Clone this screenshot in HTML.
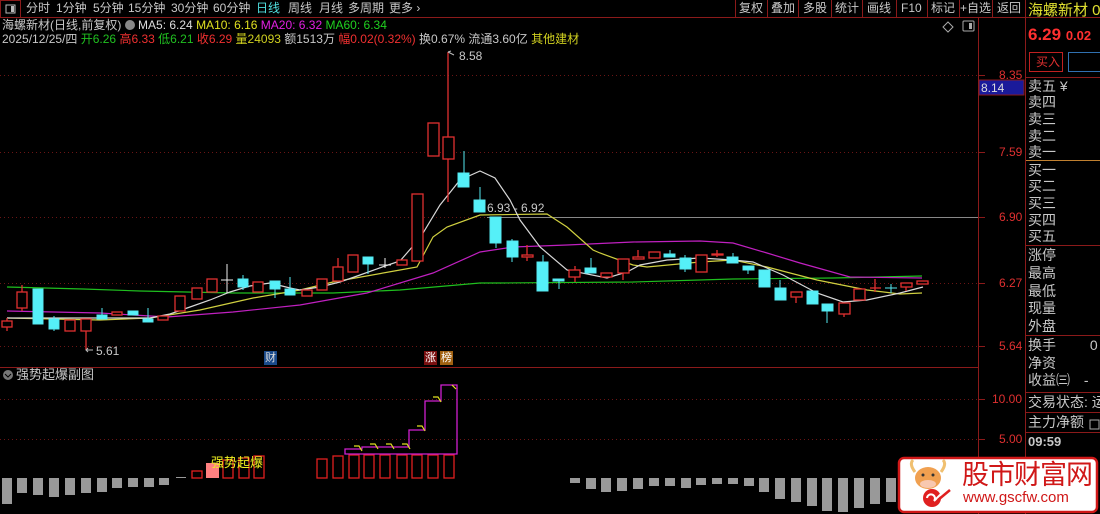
<!DOCTYPE html>
<html><head><meta charset="utf-8"><style>
*{margin:0;padding:0}
body{width:1100px;height:514px;background:#000;overflow:hidden;position:relative;font-family:"Liberation Sans","Noto Sans CJK SC",sans-serif;color:#c8c8c8}
.t{position:absolute;white-space:nowrap;font-size:12px;line-height:14px}
.rp{position:absolute;left:1028px;font-size:14px;line-height:16px;color:#c8c8c8;white-space:nowrap}
</style></head><body>
<svg width="1100" height="514" style="position:absolute;left:0;top:0">
<!-- frame lines -->
<line x1="0" y1="17.5" x2="1100" y2="17.5" stroke="#8b1a1a"/>
<line x1="0" y1="367.5" x2="978" y2="367.5" stroke="#8b1a1a"/>
<line x1="978.5" y1="17" x2="978.5" y2="514" stroke="#8b1a1a"/>
<line x1="1025.5" y1="0" x2="1025.5" y2="514" stroke="#8b1a1a"/>
<rect x="0.5" y="0.5" width="20" height="17" fill="none" stroke="#8b1a1a"/>
<rect x="6" y="5" width="9" height="8" fill="none" stroke="#bbb"/><rect x="11" y="6" width="3" height="6" fill="#bbb"/>
<g stroke="#8b1a1a"><line x1="767.5" y1="0" x2="767.5" y2="17"/><line x1="798.5" y1="0" x2="798.5" y2="17"/><line x1="831.5" y1="0" x2="831.5" y2="17"/><line x1="862.5" y1="0" x2="862.5" y2="17"/><line x1="896.5" y1="0" x2="896.5" y2="17"/><line x1="927.5" y1="0" x2="927.5" y2="17"/><line x1="959.5" y1="0" x2="959.5" y2="17"/><line x1="992.5" y1="0" x2="992.5" y2="17"/><line x1="735.5" y1="0" x2="735.5" y2="17"/></g>
<!-- grid -->
<g stroke="#6a1515" stroke-dasharray="1,3">
<line x1="0" y1="75.5" x2="978" y2="75.5"/><line x1="0" y1="152.5" x2="978" y2="152.5"/><line x1="0" y1="217.5" x2="978" y2="217.5"/><line x1="0" y1="283.5" x2="978" y2="283.5"/><line x1="0" y1="346.5" x2="978" y2="346.5"/>
<line x1="0" y1="399.5" x2="978" y2="399.5"/><line x1="0" y1="439.5" x2="978" y2="439.5"/>
</g>
<g stroke="#8b1a1a"><line x1="978" y1="75.5" x2="985" y2="75.5"/><line x1="978" y1="152.5" x2="985" y2="152.5"/><line x1="978" y1="217.5" x2="985" y2="217.5"/><line x1="978" y1="283.5" x2="985" y2="283.5"/><line x1="978" y1="346.5" x2="985" y2="346.5"/><line x1="978" y1="399.5" x2="985" y2="399.5"/><line x1="978" y1="439.5" x2="985" y2="439.5"/></g>
<line x1="487" y1="217.5" x2="978" y2="217.5" stroke="#888"/>
<rect x="979" y="80" width="45" height="15" fill="#1a1a9a" stroke="#8b1a1a"/>
<!-- icons top right -->
<path d="M948 22 l5 5 -5 5 -5 -5z" fill="none" stroke="#aaa"/>
<rect x="963" y="21" width="11" height="10" rx="1" fill="none" stroke="#aaa"/><rect x="969" y="23" width="3" height="6" fill="#aaa"/>
<!-- MA lines -->
<polyline fill="none" stroke="#1fbf1f" stroke-width="1.2" points="7,287 83,289 140,291 233,293 333,293 400,290 480,283 500,283 633,282 733,279 833,278 922,276"/>
<polyline fill="none" stroke="#c020c0" stroke-width="1.2" points="7,311 100,313 167,317 233,312 300,305 367,293 433,273 480,252 513,247 567,245 633,242 700,241 733,243 767,253 800,263 850,277 922,278"/>
<polyline fill="none" stroke="#d0d040" stroke-width="1.2" points="7,318 100,320 150,318 200,310 253,298 300,290 333,282 400,270 417,267 433,237 447,227 480,215 547,214 567,227 593,250 600,253 633,265 647,267 700,262 733,260 767,267 817,280 867,290 900,294 922,293"/>
<polyline fill="none" stroke="#d8d8d8" stroke-width="1.2" points="7,318 100,318 150,318 170,314 190,307 210,300 230,292 250,286 270,283 290,288 300,290 320,287 340,282 360,275 385,266 400,261 420,238 440,205 460,180 480,171 495,178 510,200 520,220 540,247 567,270 607,278 627,272 640,265 667,260 700,258 733,260 753,262 783,275 817,293 843,302 867,300 900,293 923,287"/>
<!-- candles -->
<g stroke="#e03030" fill="#000" stroke-width="1.3">
<line x1="7" y1="318" x2="7" y2="331"/><rect x="2" y="321" width="10" height="6"/>
<line x1="22" y1="285" x2="22" y2="311"/><rect x="17" y="292" width="10" height="16"/>
<rect x="65" y="320" width="10" height="11"/>
<line x1="86" y1="319" x2="86" y2="350"/><rect x="81" y="319" width="10" height="12"/>
<rect x="112" y="312" width="10" height="3"/>
<rect x="158" y="316" width="10" height="4"/>
<rect x="175" y="296" width="10" height="15"/>
<rect x="192" y="288" width="10" height="11"/>
<rect x="207" y="279" width="10" height="13"/>
<rect x="253" y="282" width="10" height="10"/>
<rect x="302" y="290" width="10" height="6"/>
<rect x="317" y="279" width="10" height="11"/>
<line x1="338" y1="258" x2="338" y2="267"/><rect x="333" y="267" width="10" height="14"/>
<rect x="348" y="255" width="10" height="17"/>
<rect x="397" y="260" width="10" height="5"/>
<rect x="412" y="194" width="11" height="67"/>
<rect x="428" y="123" width="11" height="33"/>
<line x1="448" y1="52" x2="448" y2="202"/><rect x="443" y="137" width="11" height="22"/>
<line x1="527" y1="245" x2="527" y2="261"/><rect x="522" y="255" width="11" height="2"/>
<line x1="575" y1="266" x2="575" y2="282"/><rect x="569" y="270" width="11" height="7"/>
<rect x="601" y="273" width="11" height="4"/>
<line x1="623" y1="259" x2="623" y2="280"/><rect x="618" y="259" width="11" height="14"/>
<line x1="638" y1="250" x2="638" y2="259"/><rect x="633" y="257" width="11" height="2"/>
<rect x="649" y="252" width="11" height="6"/>
<rect x="696" y="255" width="11" height="17"/>
<line x1="717" y1="250" x2="717" y2="257"/><rect x="712" y="254" width="11" height="1"/>
<line x1="796" y1="292" x2="796" y2="303"/><rect x="791" y="292" width="11" height="5"/>
<line x1="844" y1="314" x2="844" y2="317"/><rect x="839" y="303" width="11" height="11"/>
<rect x="854" y="289" width="11" height="11"/>
<line x1="875" y1="279" x2="875" y2="292"/><line x1="870" y1="288" x2="881" y2="288"/>
<line x1="906" y1="287" x2="906" y2="291"/><rect x="901" y="283" width="11" height="4"/>
<rect x="917" y="281" width="11" height="3"/>
</g>
<g stroke="#55e8f0" fill="#55f0f8" stroke-width="1">
<rect x="33" y="289" width="10" height="35"/>
<line x1="54" y1="316" x2="54" y2="331"/><rect x="49" y="319" width="10" height="10"/>
<line x1="102" y1="308" x2="102" y2="315"/><rect x="97" y="315" width="10" height="4"/>
<rect x="128" y="311" width="10" height="4"/>
<line x1="148" y1="308" x2="148" y2="322"/><rect x="143" y="319" width="10" height="3"/>
<line x1="243" y1="275" x2="243" y2="290"/><rect x="238" y="279" width="10" height="8"/>
<line x1="275" y1="281" x2="275" y2="298"/><rect x="270" y="281" width="10" height="8"/>
<line x1="290" y1="277" x2="290" y2="295"/><rect x="285" y="289" width="10" height="6"/>
<line x1="368" y1="257" x2="368" y2="274"/><rect x="363" y="257" width="10" height="7"/>
<line x1="464" y1="151" x2="464" y2="187"/><rect x="458" y="173" width="11" height="14"/>
<line x1="480" y1="187" x2="480" y2="212"/><rect x="474" y="200" width="11" height="12"/>
<line x1="496" y1="217" x2="496" y2="248"/><rect x="490" y="217" width="11" height="26"/>
<line x1="512" y1="239" x2="512" y2="262"/><rect x="507" y="241" width="11" height="16"/>
<line x1="543" y1="255" x2="543" y2="291"/><rect x="537" y="262" width="11" height="29"/>
<line x1="559" y1="279" x2="559" y2="289"/><rect x="553" y="279" width="11" height="2"/>
<line x1="591" y1="258" x2="591" y2="273"/><rect x="585" y="268" width="11" height="5"/>
<line x1="670" y1="250" x2="670" y2="257"/><rect x="664" y="254" width="11" height="3"/>
<line x1="685" y1="255" x2="685" y2="272"/><rect x="680" y="258" width="11" height="11"/>
<line x1="733" y1="253" x2="733" y2="263"/><rect x="727" y="257" width="11" height="6"/>
<line x1="748" y1="266" x2="748" y2="274"/><rect x="743" y="266" width="11" height="4"/>
<rect x="759" y="270" width="11" height="17"/>
<line x1="780" y1="280" x2="780" y2="300"/><rect x="775" y="288" width="11" height="12"/>
<rect x="807" y="291" width="11" height="13"/>
<line x1="827" y1="304" x2="827" y2="323"/><rect x="822" y="304" width="11" height="7"/>
<line x1="891" y1="284" x2="891" y2="293"/><line x1="885" y1="288" x2="897" y2="288"/>
</g>
<g stroke="#eee"><line x1="227" y1="264" x2="227" y2="293"/><line x1="221" y1="280" x2="233" y2="280"/><line x1="385" y1="258" x2="385" y2="268"/><line x1="379" y1="265" x2="391" y2="265"/></g>
<!-- annotations -->
<path d="M86 350 H93 M88 348 l-2 2 2 2" stroke="#bbb" fill="none"/>
<path d="M448 52 l6 3 M448 52 l3 -1" stroke="#bbb" fill="none"/>
<rect x="264" y="351" width="13" height="14" fill="#1a4a8a"/>
<rect x="424" y="351" width="13" height="14" fill="#7a1010"/>
<rect x="440" y="351" width="13" height="14" fill="#a06010"/>
<!-- sub chart -->
<circle cx="8" cy="375" r="5" fill="#777"/><path d="M5 374 l3 3 3 -3" stroke="#000" fill="none"/>
<g fill="#999"><rect x="2" y="478" width="10" height="26"/><rect x="17" y="478" width="10" height="15"/><rect x="33" y="478" width="10" height="17"/><rect x="49" y="478" width="10" height="19"/><rect x="65" y="478" width="10" height="17"/><rect x="81" y="478" width="10" height="15"/><rect x="97" y="478" width="10" height="14"/><rect x="112" y="478" width="10" height="10"/><rect x="128" y="478" width="10" height="9"/><rect x="144" y="478" width="10" height="9"/><rect x="159" y="478" width="10" height="7"/><rect x="176" y="477" width="10" height="1"/>
<rect x="570" y="478" width="10" height="5"/><rect x="586" y="478" width="10" height="11"/><rect x="601" y="478" width="10" height="14"/><rect x="617" y="478" width="10" height="13"/><rect x="633" y="478" width="10" height="11"/><rect x="649" y="478" width="10" height="8"/><rect x="665" y="478" width="10" height="8"/><rect x="681" y="478" width="10" height="10"/><rect x="696" y="478" width="10" height="7"/><rect x="712" y="478" width="10" height="6"/><rect x="728" y="478" width="10" height="6"/><rect x="744" y="478" width="10" height="8"/><rect x="759" y="478" width="10" height="14"/><rect x="775" y="478" width="10" height="21"/><rect x="791" y="478" width="10" height="24"/><rect x="807" y="478" width="10" height="28"/><rect x="822" y="478" width="10" height="33"/><rect x="838" y="478" width="10" height="34"/><rect x="854" y="478" width="10" height="30"/><rect x="870" y="478" width="10" height="26"/><rect x="886" y="478" width="10" height="24"/></g>
<rect x="206" y="463" width="13" height="15" fill="#ff8080"/>
<g fill="none" stroke="#e02020" stroke-width="1.3">
<rect x="192" y="471" width="10" height="7"/><rect x="223" y="460" width="10" height="18"/><rect x="239" y="458" width="10" height="20"/><rect x="254" y="456" width="10" height="22"/>
<rect x="317" y="459" width="10" height="19"/><rect x="333" y="456" width="10" height="22"/><rect x="349" y="455" width="10" height="23"/><rect x="364" y="455" width="10" height="23"/><rect x="380" y="455" width="10" height="23"/><rect x="397" y="455" width="10" height="23"/><rect x="412" y="455" width="10" height="23"/><rect x="428" y="455" width="10" height="23"/><rect x="444" y="455" width="10" height="23"/>
</g>
<path d="M345 454 V449 H362 V447 H409 V430 H425 V401 H441 V385 H457 V454 Z" fill="none" stroke="#d020d0" stroke-width="1.3"/>
<g stroke="#e0e020" fill="none" stroke-width="1.2"><path d="M354 446 h5 l3 5"/><path d="M370 444 h5 l3 5"/><path d="M386 444 h5 l3 5"/><path d="M402 444 h5 l3 5"/><path d="M417 426 h5 l3 5"/><path d="M433 397 h5 l3 5"/><path d="M452 385 l4 4"/></g>
<!-- right panel lines -->
<line x1="1026" y1="77.5" x2="1100" y2="77.5" stroke="#8b1a1a"/>
<line x1="1026" y1="160.5" x2="1100" y2="160.5" stroke="#c08030"/>
<line x1="1026" y1="245.5" x2="1100" y2="245.5" stroke="#8b1a1a"/>
<line x1="1026" y1="335.5" x2="1100" y2="335.5" stroke="#8b1a1a"/>
<line x1="1026" y1="392.5" x2="1100" y2="392.5" stroke="#8b1a1a"/>
<line x1="1026" y1="412.5" x2="1100" y2="412.5" stroke="#8b1a1a"/>
<line x1="1026" y1="432.5" x2="1100" y2="432.5" stroke="#8b1a1a"/>
<rect x="1029.5" y="52.5" width="33" height="19" fill="none" stroke="#c02020"/>
<rect x="1068.5" y="52.5" width="40" height="19" fill="none" stroke="#3070b0"/>
<rect x="1090" y="420" width="9" height="9" fill="none" stroke="#aaa"/>
<!-- logo -->
<rect x="899" y="458" width="198" height="54" rx="5" fill="#fff" stroke="#d01818" stroke-width="2.5"/>
<ellipse cx="928" cy="478" rx="13" ry="11" fill="#f0a050"/>
<path d="M915 472 q-6 -8 -2 -12 M941 472 q6 -8 2 -12" stroke="#f0c070" stroke-width="3" fill="none"/>
<ellipse cx="928" cy="484" rx="8" ry="4" fill="#f8c8b0"/>
<circle cx="923" cy="475" r="1.5" fill="#333"/><circle cx="933" cy="475" r="1.5" fill="#333"/>
<circle cx="932" cy="498" r="9" fill="#e02020"/><path d="M927 498 a4 4 0 1 1 7 3 l6 -6 l4 3" stroke="#fff" stroke-width="2" fill="none"/>
<path d="M938 500 l12 -10" stroke="#e02020" stroke-width="2.5"/>
</svg>
<!-- toolbar text -->
<div class="t" style="top:1px;left:26px;color:#c8c8c8;font-size:12px">分时</div>
<div class="t" style="top:1px;left:56px">1分钟</div>
<div class="t" style="top:1px;left:93px">5分钟</div>
<div class="t" style="top:1px;left:128px">15分钟</div>
<div class="t" style="top:1px;left:171px">30分钟</div>
<div class="t" style="top:1px;left:213px">60分钟</div>
<div class="t" style="top:1px;left:256px;color:#50e0e0">日线</div>
<div class="t" style="top:1px;left:288px">周线</div>
<div class="t" style="top:1px;left:319px">月线</div>
<div class="t" style="top:1px;left:348px">多周期</div>
<div class="t" style="top:1px;left:389px">更多 ›</div>
<div class="t" style="top:1px;left:739px">复权</div>
<div class="t" style="top:1px;left:771px">叠加</div>
<div class="t" style="top:1px;left:803px">多股</div>
<div class="t" style="top:1px;left:835px">统计</div>
<div class="t" style="top:1px;left:867px">画线</div>
<div class="t" style="top:1px;left:901px">F10</div>
<div class="t" style="top:1px;left:931px">标记</div>
<div class="t" style="top:1px;left:960px">+自选</div>
<div class="t" style="top:1px;left:997px">返回</div>
<!-- info lines -->
<div class="t" style="top:18px;left:2px">海螺新材(日线,前复权) <span style="display:inline-block;width:10px;height:10px;border-radius:5px;background:#888;vertical-align:-1px"></span> <span style="color:#ddd">MA5: 6.24</span> <span style="color:#e0e020">MA10: 6.16</span> <span style="color:#e020e0">MA20: 6.32</span> <span style="color:#20d020">MA60: 6.34</span></div>
<div class="t" style="top:32px;left:2px">2025/12/25/四 <span style="color:#20c020">开6.26</span> <span style="color:#f03030">高6.33</span> <span style="color:#20c020">低6.21</span> <span style="color:#f03030">收6.29</span> <span style="color:#d0d020">量24093</span> 额1513万 <span style="color:#f03030">幅0.02(0.32%)</span> 换0.67% 流通3.60亿 <span style="color:#d0d020">其他建材</span></div>
<div class="t" style="top:49px;left:459px">8.58</div>
<div class="t" style="top:344px;left:96px">5.61</div>
<div class="t" style="top:201px;left:487px">6.93 - 6.92</div>
<div class="t" style="top:351px;left:265px;color:#ddd;font-size:11px">财</div>
<div class="t" style="top:351px;left:425px;color:#fff;font-size:11px">涨</div>
<div class="t" style="top:351px;left:441px;color:#fff;font-size:11px">榜</div>
<div class="t" style="top:368px;left:16px;font-size:13px">强势起爆副图</div>
<div class="t" style="top:456px;left:211px;color:#f0f020;font-size:13px">强势起爆</div>
<!-- axis -->
<div class="t" style="top:68px;left:999px;color:#e03030">8.35</div>
<div class="t" style="top:81px;left:981px;color:#ddd">8.14</div>
<div class="t" style="top:145px;left:999px;color:#e03030">7.59</div>
<div class="t" style="top:210px;left:999px;color:#e03030">6.90</div>
<div class="t" style="top:276px;left:999px;color:#e03030">6.27</div>
<div class="t" style="top:339px;left:999px;color:#e03030">5.64</div>
<div class="t" style="top:392px;left:992px;color:#e03030">10.00</div>
<div class="t" style="top:432px;left:999px;color:#e03030">5.00</div>
<!-- right panel -->
<div class="rp" style="top:3px;color:#e0e030;font-size:15px">海螺新材 00</div>
<div class="rp" style="top:27px;color:#ff3030;font-size:17px;font-weight:bold">6.29 <span style="font-size:13px">0.02</span></div>
<div class="rp" style="top:54px;left:1036px;color:#e03030;font-size:12px">买入</div>
<div class="rp" style="top:78px">卖五 ¥</div>
<div class="rp" style="top:94px">卖四</div>
<div class="rp" style="top:111px">卖三</div>
<div class="rp" style="top:128px">卖二</div>
<div class="rp" style="top:144px">卖一</div>
<div class="rp" style="top:162px">买一</div>
<div class="rp" style="top:178px">买二</div>
<div class="rp" style="top:195px">买三</div>
<div class="rp" style="top:212px">买四</div>
<div class="rp" style="top:228px">买五</div>
<div class="rp" style="top:247px">涨停</div>
<div class="rp" style="top:265px">最高</div>
<div class="rp" style="top:283px">最低</div>
<div class="rp" style="top:300px">现量</div>
<div class="rp" style="top:318px">外盘</div>
<div class="rp" style="top:337px">换手 <span style="margin-left:30px">0</span></div>
<div class="rp" style="top:355px">净资</div>
<div class="rp" style="top:372px">收益㈢ <span style="margin-left:10px">-</span></div>
<div class="rp" style="top:394px">交易状态: 运</div>
<div class="rp" style="top:414px">主力净额</div>
<div class="rp" style="top:434px;font-weight:bold;font-size:13px">09:59</div>
<!-- logo text -->
<div class="t" style="top:460px;left:962px;color:#d01818;font-size:27px;line-height:30px;letter-spacing:-1px">股市财富网</div>
<div class="t" style="top:490px;left:963px;color:#d01818;font-size:15px;line-height:16px">www.gscfw.com</div>
</body></html>
